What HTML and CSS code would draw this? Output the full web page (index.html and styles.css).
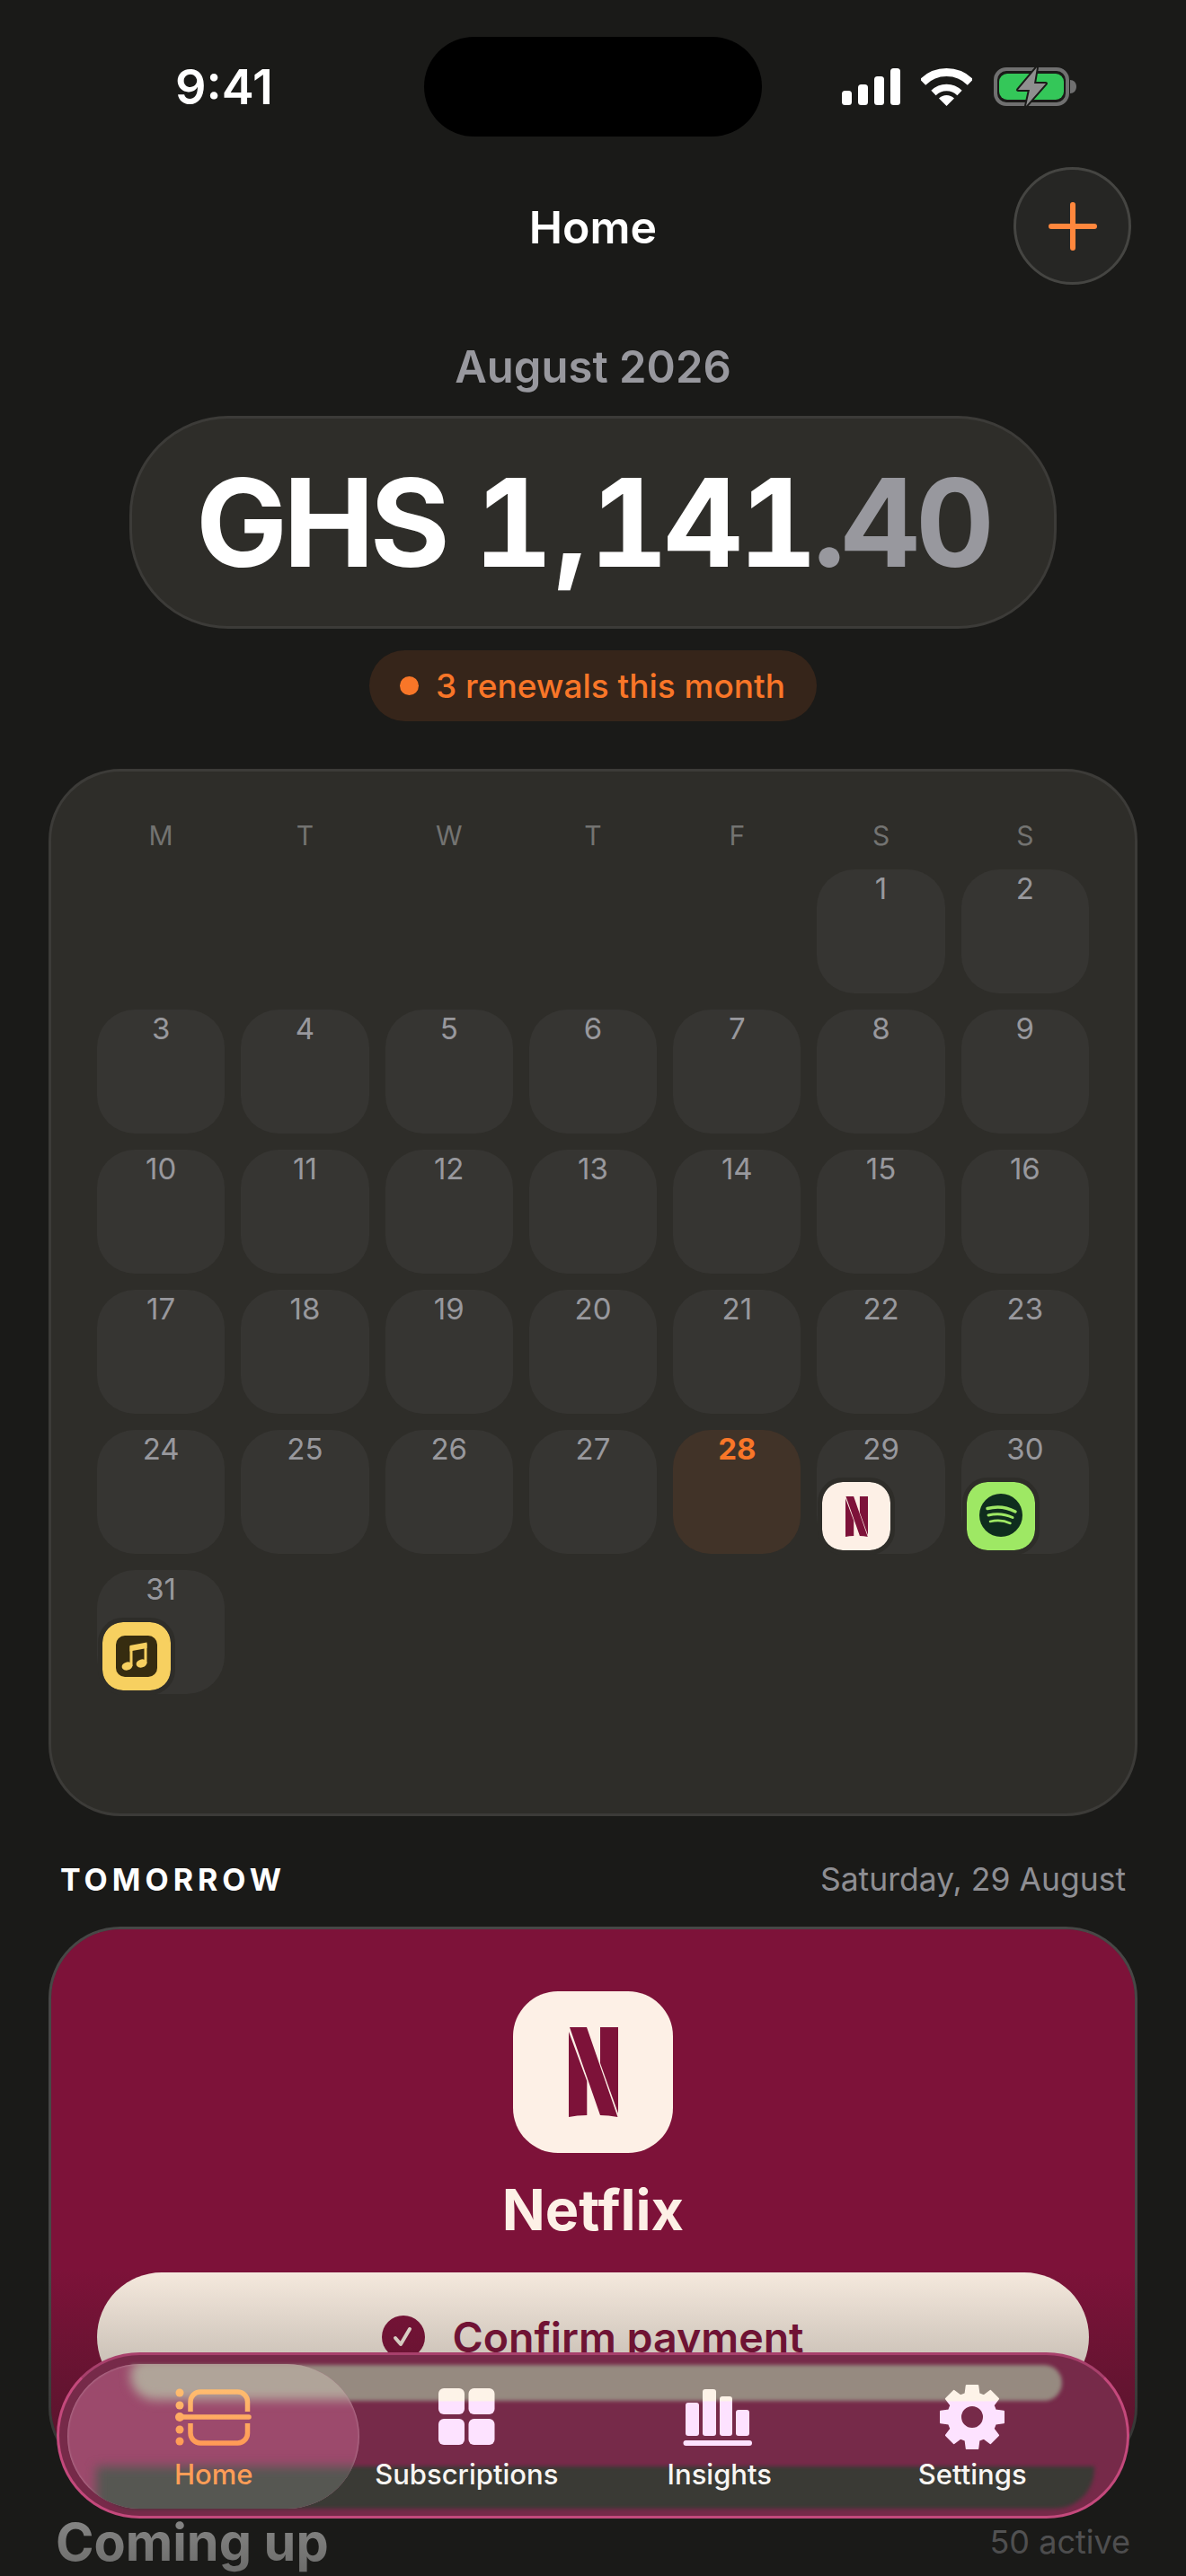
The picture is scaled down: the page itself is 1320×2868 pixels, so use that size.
FILE: index.html
```html
<!DOCTYPE html>
<html lang="en">
<head>
  <meta charset="UTF-8">
  <meta name="viewport" content="width=device-width, initial-scale=1.0">
  <title>Home</title>
  <link rel="stylesheet" href="styles.css">
</head>
<body>
  <!-- shared gradients for the tab icons -->
  <svg class="svg-defs" aria-hidden="true">
    <defs>
      <linearGradient id="tab-fill" gradientUnits="userSpaceOnUse" x1="0" y1="0" x2="0" y2="80">
        <stop offset="0.27" stop-color="#fdf3e8"/>
        <stop offset="0.29" stop-color="#fde2ff"/>
      </linearGradient>
      <linearGradient id="gear-fill" gradientUnits="userSpaceOnUse" x1="0" y1="-40" x2="0" y2="40">
        <stop offset="0.27" stop-color="#fdf3e8"/>
        <stop offset="0.29" stop-color="#fde2ff"/>
      </linearGradient>
      <linearGradient id="home-fill" gradientUnits="userSpaceOnUse" x1="0" y1="8" x2="0" y2="72">
        <stop offset="0" stop-color="#ffbd70"/>
        <stop offset="1" stop-color="#ff9a55"/>
      </linearGradient>
    </defs>
  </svg>

  <div class="phone">
    <!-- Status bar -->
    <div class="status-bar">
      <span class="status-time">9:41</span>
      <div class="island"></div>
      <div class="status-icons">
        <svg width="65" height="41" viewBox="0 0 65 41" fill="#fff">
          <rect x="0" y="25" width="11" height="16" rx="3.5"/>
          <rect x="18" y="18" width="11" height="23" rx="3.5"/>
          <rect x="36" y="9" width="11" height="32" rx="3.5"/>
          <rect x="54" y="0" width="11" height="41" rx="3.5"/>
        </svg>
        <svg width="57" height="42" viewBox="0 0 57 42" fill="none" stroke="#fff">
          <path d="M2 15.5A37.5 37.5 0 0 1 55 15.5" stroke-width="9"/>
          <path d="M14 27.5A20.5 20.5 0 0 1 43 27.5" stroke-width="7.5"/>
          <path d="M28.5 42L20 33.5A12 12 0 0 1 37 33.5Z" fill="#fff" stroke="none"/>
        </svg>
        <svg class="battery" width="92" height="43" viewBox="0 0 92 43">
          <rect x="2" y="2" width="80" height="39" rx="12" fill="none" stroke="#707070" stroke-width="4"/>
          <rect x="6" y="7" width="72" height="29" rx="9" fill="#34c759"/>
          <path d="M85 14c4 0 7 3 7 7.500s-3 7.500-7 7.500z" fill="#707070"/>
          <path d="M48 0L27 25H40L36 43L58 18H45Z" fill="#8f8f8f" stroke="#1a1a18" stroke-width="4" stroke-linejoin="round" paint-order="stroke"/>
        </svg>
      </div>
    </div>

    <!-- Header -->
    <header class="top-nav">
      <span></span>
      <h1 class="top-title">Home</h1>
      <button class="add-btn" aria-label="Add">
        <svg width="54" height="54" viewBox="0 0 54 54" fill="none" stroke="#ff873d" stroke-width="6" stroke-linecap="round">
          <path d="M27 3V51M3 27H51"/>
        </svg>
      </button>
    </header>

    <!-- Month total -->
    <section class="summary">
      <div class="summary-month">August 2026</div>
      <div class="summary-total">GHS 1<span class="comma">,</span>141<span class="cents">.40</span></div>
      <div class="renewal-pill"><span class="renewal-dot"></span>3 renewals this month</div>
    </section>

    <!-- Calendar -->
    <section class="calendar">
      <div class="cal-grid">
        <div class="weekday">M</div><div class="weekday">T</div><div class="weekday">W</div><div class="weekday">T</div><div class="weekday">F</div><div class="weekday">S</div><div class="weekday">S</div>
        <div class="blank"></div><div class="blank"></div><div class="blank"></div><div class="blank"></div><div class="blank"></div>
        <div class="day">1</div><div class="day">2</div>
        <div class="day">3</div><div class="day">4</div><div class="day">5</div><div class="day">6</div><div class="day">7</div><div class="day">8</div><div class="day">9</div>
        <div class="day">10</div><div class="day">11</div><div class="day">12</div><div class="day">13</div><div class="day">14</div><div class="day">15</div><div class="day">16</div>
        <div class="day">17</div><div class="day">18</div><div class="day">19</div><div class="day">20</div><div class="day">21</div><div class="day">22</div><div class="day">23</div>
        <div class="day">24</div><div class="day">25</div><div class="day">26</div><div class="day">27</div>
        <div class="day today">28</div>
        <div class="day">29
          <span class="day-app app-netflix">
            <svg width="25" height="45" viewBox="0 0 55 100" preserveAspectRatio="none" fill="#7d1239">
              <path d="M0 5L20.300 60V98Q9 98 0 100Z"/>
              <path d="M35 0H55V96L35 40Z"/>
              <path d="M1 0H20L54.500 100Q44 98 35 98Z"/>
            </svg>
          </span>
        </div>
        <div class="day">30
          <span class="day-app app-spotify">
            <svg width="76" height="76" viewBox="0 0 76 76" fill="none">
              <circle cx="38" cy="37" r="24" fill="#0f2d1e"/>
              <g stroke="#9ee864" stroke-linecap="round">
                <path d="M23 29.500Q39 25 54 33" stroke-width="3.500"/>
                <path d="M24 37Q38 33.500 51 39.500" stroke-width="3"/>
                <path d="M26 44Q38 41 48.500 46" stroke-width="2.500"/>
              </g>
            </svg>
          </span>
        </div>
        <div class="day">31
          <span class="day-app app-music">
            <svg width="46" height="46" viewBox="0 0 46 46">
              <rect width="46" height="46" rx="10" fill="#362c10"/>
              <g fill="#f7d060">
                <path d="M15.500 11L34.500 7.500V14L15.500 17.500Z"/>
                <rect x="15.500" y="12" width="3" height="22"/>
                <rect x="31.500" y="9" width="3" height="22"/>
                <ellipse cx="12.500" cy="34" rx="6" ry="4.500" transform="rotate(-15 12.500 34)"/>
                <ellipse cx="28.500" cy="31" rx="6" ry="4.500" transform="rotate(-15 28.500 31)"/>
              </g>
            </svg>
          </span>
        </div>
      </div>
    </section>

    <!-- Tomorrow -->
    <div class="section-head">
      <span class="section-label">TOMORROW</span>
      <span class="section-date">Saturday, 29 August</span>
    </div>
    <section class="next-card">
      <div class="next-icon">
        <svg width="55" height="100" viewBox="0 0 55 100" fill="#7d1239">
          <path d="M0 5L20.300 60V98Q9 98 0 100Z"/>
          <path d="M35 0H55V96L35 40Z"/>
          <path d="M1 0H20L54.500 100Q44 98 35 98Z"/>
        </svg>
      </div>
      <div class="next-name">Netflix</div>
      <button class="confirm-btn">
        <svg width="48" height="48" viewBox="0 0 48 48" fill="none">
          <circle cx="24" cy="24" r="24" fill="#7d1239"/>
          <path d="M15 25L21 32L31 15" stroke="#f7ebdf" stroke-width="4" stroke-linecap="round" stroke-linejoin="round"/>
        </svg>
        Confirm payment
      </button>
    </section>

    <div class="coming-head">
      <span class="coming-title">Coming up</span>
      <span class="coming-count">50 active</span>
    </div>

    <!-- Fade and floating tab bar sit over the content -->
    <div class="bottom-fade"></div>
    <nav class="tab-bar">
      <div class="band band-top"></div>
      <div class="band band-low"></div>
      <div class="tab-lens">
        <div class="lens-band lens-top"></div>
        <div class="lens-band lens-low"></div>
      </div>
      <div class="tabs">
        <div class="tab active">
          <svg width="100" height="80" viewBox="0 0 100 80" fill="none" stroke="url(#home-fill)" stroke-width="5.500" stroke-linecap="round">
            <path d="M24 34V23A11 11 0 0 1 35 12H76.500A11 11 0 0 1 87.500 23V34" stroke-linecap="butt"/>
            <path d="M24 47V58A11 11 0 0 0 35 69H76.500A11 11 0 0 0 87.500 58V47" stroke-linecap="butt"/>
            <path d="M12 40H89"/>
            <g fill="url(#home-fill)" stroke="none">
              <circle cx="12" cy="13" r="4.500"/>
              <circle cx="12" cy="27" r="4.500"/>
              <circle cx="12" cy="40" r="5"/>
              <circle cx="12" cy="54" r="4.500"/>
              <circle cx="12" cy="67" r="4.500"/>
            </g>
          </svg>
          <span class="tab-label">Home</span>
        </div>
        <div class="tab">
          <svg width="100" height="80" viewBox="0 0 100 80" fill="url(#tab-fill)">
            <rect x="19" y="8" width="29" height="29" rx="6"/>
            <rect x="52.500" y="8" width="29" height="29" rx="6"/>
            <rect x="19" y="42" width="29" height="29" rx="6"/>
            <rect x="52.500" y="42" width="29" height="29" rx="6"/>
          </svg>
          <span class="tab-label">Subscriptions</span>
        </div>
        <div class="tab">
          <svg width="100" height="80" viewBox="0 0 100 80" fill="url(#tab-fill)">
            <rect x="12" y="24" width="15" height="37" rx="3"/>
            <rect x="31" y="9" width="15" height="52" rx="3"/>
            <rect x="50" y="17" width="14" height="44" rx="3"/>
            <rect x="68" y="32" width="15" height="29" rx="3"/>
            <rect x="9.500" y="66" width="76.500" height="6" rx="3"/>
          </svg>
          <span class="tab-label">Insights</span>
        </div>
        <div class="tab">
          <svg width="100" height="80" viewBox="-50 -40 100 80" fill="url(#gear-fill)" fill-rule="evenodd" stroke="url(#gear-fill)" stroke-width="2" stroke-linejoin="round">
            <path d="M-7.440 -25.950L-6.250 -35L6.250 -35L7.440 -25.950L13.090 -23.610L20.400 -29.100L29.100 -20.400L23.610 -13.090L25.950 -7.440L35 -6.250L35 6.250L25.950 7.440L23.610 13.090L29.100 20.400L20.400 29.100L13.090 23.610L7.440 25.950L6.250 35L-6.250 35L-7.440 25.950L-13.090 23.610L-20.400 29.100L-29.100 20.400L-23.610 13.090L-25.950 7.440L-35 6.250L-35 -6.250L-25.950 -7.440L-23.610 -13.090L-29.100 -20.400L-20.400 -29.100L-13.090 -23.610ZM13 0A13 13 0 1 0 -13 0A13 13 0 1 0 13 0Z"/>
          </svg>
          <span class="tab-label">Settings</span>
        </div>
      </div>
    </nav>
  </div>
</body>
</html>
```

FILE: styles.css
```css
* {
  box-sizing: border-box;
}
body {
  margin: 0;
  padding: 0;
  background: #1a1a18;
  font-family: Inter, "Liberation Sans", sans-serif;
}
button {
  font-family: inherit;
}
.svg-defs {
  position: absolute;
  width: 0;
  height: 0;
}
.phone {
  position: relative;
  width: 1320px;
  height: 2868px;
  overflow: hidden;
  background: #1a1a18;
  display: flex;
  flex-direction: column;
}

/* status bar */
.status-bar {
  display: grid;
  grid-template-columns: 1fr 376px 1fr;
  align-items: center;
  padding-top: 41px;
  flex: none;
}
.status-time {
  padding-left: 195px;
  color: #fff;
  font-size: 54px;
  font-weight: 600;
}
.island {
  height: 111px;
  border-radius: 56px;
  background: #000;
}
.status-icons {
  display: flex;
  align-items: center;
  gap: 23px;
  padding-left: 89px;
}
.battery {
  margin-left: 1px;
  overflow: visible;
}

/* header */
.top-nav {
  display: grid;
  grid-template-columns: 1fr auto 1fr;
  align-items: center;
  height: 131px;
  margin-top: 34px;
  padding-right: 61px;
  padding-left: 61px;
  flex: none;
}
.top-title {
  margin: 0;
  padding-top: 2px;
  color: #fff;
  font-size: 50px;
  font-weight: 600;
}
.add-btn {
  justify-self: end;
  display: flex;
  align-items: center;
  justify-content: center;
  width: 131px;
  height: 131px;
  padding: 0;
  border: 3px solid #454542;
  border-radius: 50%;
  background: #262624;
}

/* month total */
.summary {
  display: flex;
  flex-direction: column;
  align-items: center;
  flex: none;
}
.summary-month {
  margin-top: 62px;
  color: #98989e;
  font-size: 49px;
  line-height: 60px;
  font-weight: 600;
}
.summary-total {
  display: flex;
  align-items: center;
  justify-content: center;
  width: 1032px;
  height: 237px;
  margin-top: 24px;
  border: 3px solid #3c3b38;
  border-radius: 110px;
  background: #2e2d29;
  color: #fff;
  font-size: 136px;
  font-weight: 700;
  letter-spacing: -5px;
  white-space: pre;
  font-variant-numeric: tabular-nums;
}
.comma {
  margin: 0 7px;
}
.cents {
  color: #98989e;
}
.renewal-pill {
  display: flex;
  align-items: center;
  gap: 19px;
  height: 79px;
  margin-top: 24px;
  padding: 0 35px 0 34px;
  border-radius: 40px;
  background: #36251a;
  color: #f97628;
  font-size: 37px;
  font-weight: 500;
}
.renewal-dot {
  width: 21px;
  height: 21px;
  border-radius: 50%;
  background: #f97628;
}

/* calendar */
.calendar {
  height: 1166px;
  margin: 53px 54px 0;
  padding: 51px 51px 0;
  border: 3px solid #3c3b38;
  border-radius: 80px;
  background: #2e2d29;
  flex: none;
}
.cal-grid {
  display: grid;
  grid-template-columns: repeat(7, 1fr);
  grid-template-rows: 40px repeat(6, 138px);
  gap: 18px;
}
.weekday {
  color: #737371;
  font-size: 30px;
  line-height: 40px;
  text-align: center;
}
.day {
  position: relative;
  padding-top: 1px;
  border-radius: 42px;
  background: #363532;
  color: #98989d;
  font-size: 33px;
  line-height: 40px;
  text-align: center;
}
.today {
  background: #413328;
  color: #f97628;
  font-weight: 700;
}
.day-app {
  position: absolute;
  left: 1px;
  bottom: -1px;
  display: flex;
  align-items: center;
  justify-content: center;
  width: 86px;
  height: 86px;
  border: 5px solid #2e2d29;
  border-radius: 28px;
  overflow: hidden;
  background-clip: padding-box;
}
.app-netflix {
  background-color: #fdf0e6;
}
.app-spotify {
  background-color: #9ee864;
}
.app-music {
  background-color: #f7d060;
}

/* tomorrow */
.section-head {
  display: flex;
  align-items: center;
  justify-content: space-between;
  height: 40px;
  margin-top: 50px;
  padding: 0 67px;
  flex: none;
}
.section-label {
  color: #fff;
  font-size: 34px;
  font-weight: 700;
  letter-spacing: 5px;
}
.section-date {
  color: #8e8e93;
  font-size: 35.500px;
}
.next-card {
  display: flex;
  flex-direction: column;
  align-items: center;
  height: 615px;
  margin: 33px 54px 0;
  padding: 69px 51px 0;
  border: 3px solid rgba(255, 255, 255, 0.2);
  border-radius: 80px;
  background: #7d1239;
  background-clip: padding-box;
  flex: none;
}
.next-icon {
  display: flex;
  align-items: center;
  justify-content: center;
  width: 178px;
  height: 180px;
  border-radius: 50px;
  background: #fdf0e6;
}
.next-name {
  margin-top: 28px;
  color: #fdf0e6;
  font-size: 63px;
  line-height: 70px;
  font-weight: 700;
}
.confirm-btn {
  display: flex;
  align-items: center;
  justify-content: center;
  gap: 30px;
  width: 100%;
  height: 144px;
  margin-top: 35px;
  padding: 0;
  border: 0;
  border-radius: 72px;
  background: #f7ebdf;
  color: #7d1239;
  font-size: 46.500px;
  font-weight: 600;
}

/* coming up */
.coming-head {
  display: flex;
  align-items: center;
  justify-content: space-between;
  height: 70px;
  margin-top: 35px;
  padding: 0 62px;
  flex: none;
}
.coming-title {
  color: #fff;
  font-size: 57.500px;
  font-weight: 700;
}
.coming-count {
  color: #98989d;
  font-size: 36px;
}
.bottom-fade {
  position: absolute;
  left: 0;
  right: 0;
  bottom: 0;
  height: 343px;
  background: linear-gradient(to bottom, rgba(26, 26, 24, 0), rgba(26, 26, 24, 0.65));
}

/* floating tab bar */
.tab-bar {
  position: absolute;
  left: 63px;
  top: 2619px;
  width: 1194px;
  height: 185px;
  border: 3px solid #c4497c;
  border-top-color: #a8406c;
  border-radius: 93px;
  overflow: hidden;
  background: #762a49;
}
.band {
  position: absolute;
  filter: blur(2px);
}
.band-top {
  left: 80px;
  right: 72px;
  top: 11px;
  height: 40px;
  border-radius: 0 30px 30px 0;
  background: #968a80;
}
.band-low {
  left: 40px;
  right: 36px;
  top: 124px;
  height: 47px;
  border-radius: 0 0 44px 44px;
  background: #3a3a35;
}
.tab-lens {
  position: absolute;
  left: 9px;
  top: 10px;
  width: 325px;
  height: 161px;
  border-radius: 81px;
  overflow: hidden;
  background: #9c4a6c;
  box-shadow: inset 0 0 2px 1px rgba(255, 255, 255, 0.2);
}
.lens-band {
  position: absolute;
  filter: blur(6px);
}
.lens-top {
  left: 70px;
  right: -20px;
  top: -6px;
  height: 46px;
  border-radius: 20px 0 0 30px;
  background: #b0a499;
}
.lens-low {
  left: 32px;
  right: -20px;
  top: 114px;
  height: 60px;
  background: #565752;
}
.tabs {
  position: relative;
  display: grid;
  grid-template-columns: repeat(4, 1fr);
  padding: 29px 31px 0;
}
.tab {
  display: flex;
  flex-direction: column;
  align-items: center;
}
.tab-label {
  margin-top: 6px;
  color: #f8f5f2;
  font-size: 31px;
  line-height: 36px;
  font-weight: 500;
}
.tab.active .tab-label {
  color: #ff9d57;
}
```
